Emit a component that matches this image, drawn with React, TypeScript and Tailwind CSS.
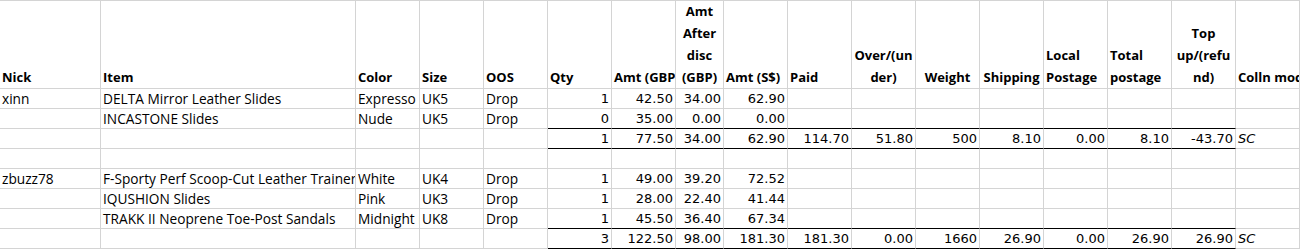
import React from "react";

const text = '"Comic Sans MS", "Open Sans", sans-serif';
const num = 'Tahoma, "DejaVu Sans", sans-serif';

type H = { lines: string[]; center?: boolean };

const headers: H[] = [
  { lines: ["Nick"] },
  { lines: ["Item"] },
  { lines: ["Color"] },
  { lines: ["Size"] },
  { lines: ["OOS"] },
  { lines: ["Qty"] },
  { lines: ["Amt (GBP)"] },
  { lines: ["Amt", "After", "disc", "(GBP)"], center: true },
  { lines: ["Amt (S$)"] },
  { lines: ["Paid"] },
  { lines: ["Over/(un", "der)"], center: true },
  { lines: ["Weight"], center: true },
  { lines: ["Shipping"], center: true },
  { lines: ["Local", "Postage"] },
  { lines: ["Total", "postage"] },
  { lines: ["Top", "up/(refu", "nd)"], center: true },
  { lines: ["Colln mode"] },
];

// total: marks the row that carries the black rule above and below
const rows: { cells: string[]; total?: boolean }[] = [
  { cells: ["xinn", "DELTA Mirror Leather Slides", "Expresso Brown", "UK5", "Drop", "1", "42.50", "34.00", "62.90"] },
  { cells: ["", "INCASTONE Slides", "Nude", "UK5", "Drop", "0", "35.00", "0.00", "0.00"] },
  { cells: ["", "", "", "", "", "1", "77.50", "34.00", "62.90", "114.70", "51.80", "500", "8.10", "0.00", "8.10", "-43.70", "SC"], total: true },
  { cells: [] },
  { cells: ["zbuzz78", "F-Sporty Perf Scoop-Cut Leather Trainers", "White", "UK4", "Drop", "1", "49.00", "39.20", "72.52"] },
  { cells: ["", "IQUSHION Slides", "Pink", "UK3", "Drop", "1", "28.00", "22.40", "41.44"] },
  { cells: ["", "TRAKK II Neoprene Toe-Post Sandals", "Midnight navy", "UK8", "Drop", "1", "45.50", "36.40", "67.34"] },
  { cells: ["", "", "", "", "", "3", "122.50", "98.00", "181.30", "181.30", "0.00", "1660", "26.90", "0.00", "26.90", "26.90", "SC"], total: true },
];

export default function App() {
  return (
    <div className="w-[1300px] h-[249px] bg-white text-black overflow-hidden">
      <div className="grid grid-cols-[101px_255px_64px_64px_64px_64px_64px_48px_64px_64px_64px_64px_64px_64px_64px_64px_64px] border-t border-[#d4d4d4]">
        {headers.map((h, i) => (
          <div
            key={i}
            className={`h-[88px] border-r border-b border-[#d4d4d4] flex flex-col justify-end overflow-hidden whitespace-nowrap px-[2px] text-[13px] leading-[22px] font-bold ${h.center ? "items-center text-center" : "items-start"}`}
            style={{ fontFamily: text }}
          >
            {h.lines.map((l) => (
              <span key={l}>{l}</span>
            ))}
          </div>
        ))}
        {rows.map((r, ri) =>
          Array.from({ length: 17 }).map((_, ci) => {
            const v = r.cells[ci] ?? "";
            const next = rows[ri + 1];
            const rule = ci >= 5 && ci <= 15 && (r.total || next?.total);
            const isNum = ci >= 5 && ci <= 15;
            return (
              <div
                key={`${ri}-${ci}`}
                className={`h-[20px] border-r border-b border-r-[#d4d4d4] ${rule ? "border-b-black" : "border-b-[#d4d4d4]"} flex items-end overflow-hidden whitespace-nowrap px-[2px] leading-[19px] ${isNum || ci === 16 ? "text-[13px]" : "text-[13.7px]"} ${isNum ? "justify-end" : "justify-start"} ${ci === 16 ? "italic" : ""}`}
                style={{ fontFamily: isNum || ci === 16 ? num : text }}
              >
                {v}
              </div>
            );
          })
        )}
      </div>
    </div>
  );
}
